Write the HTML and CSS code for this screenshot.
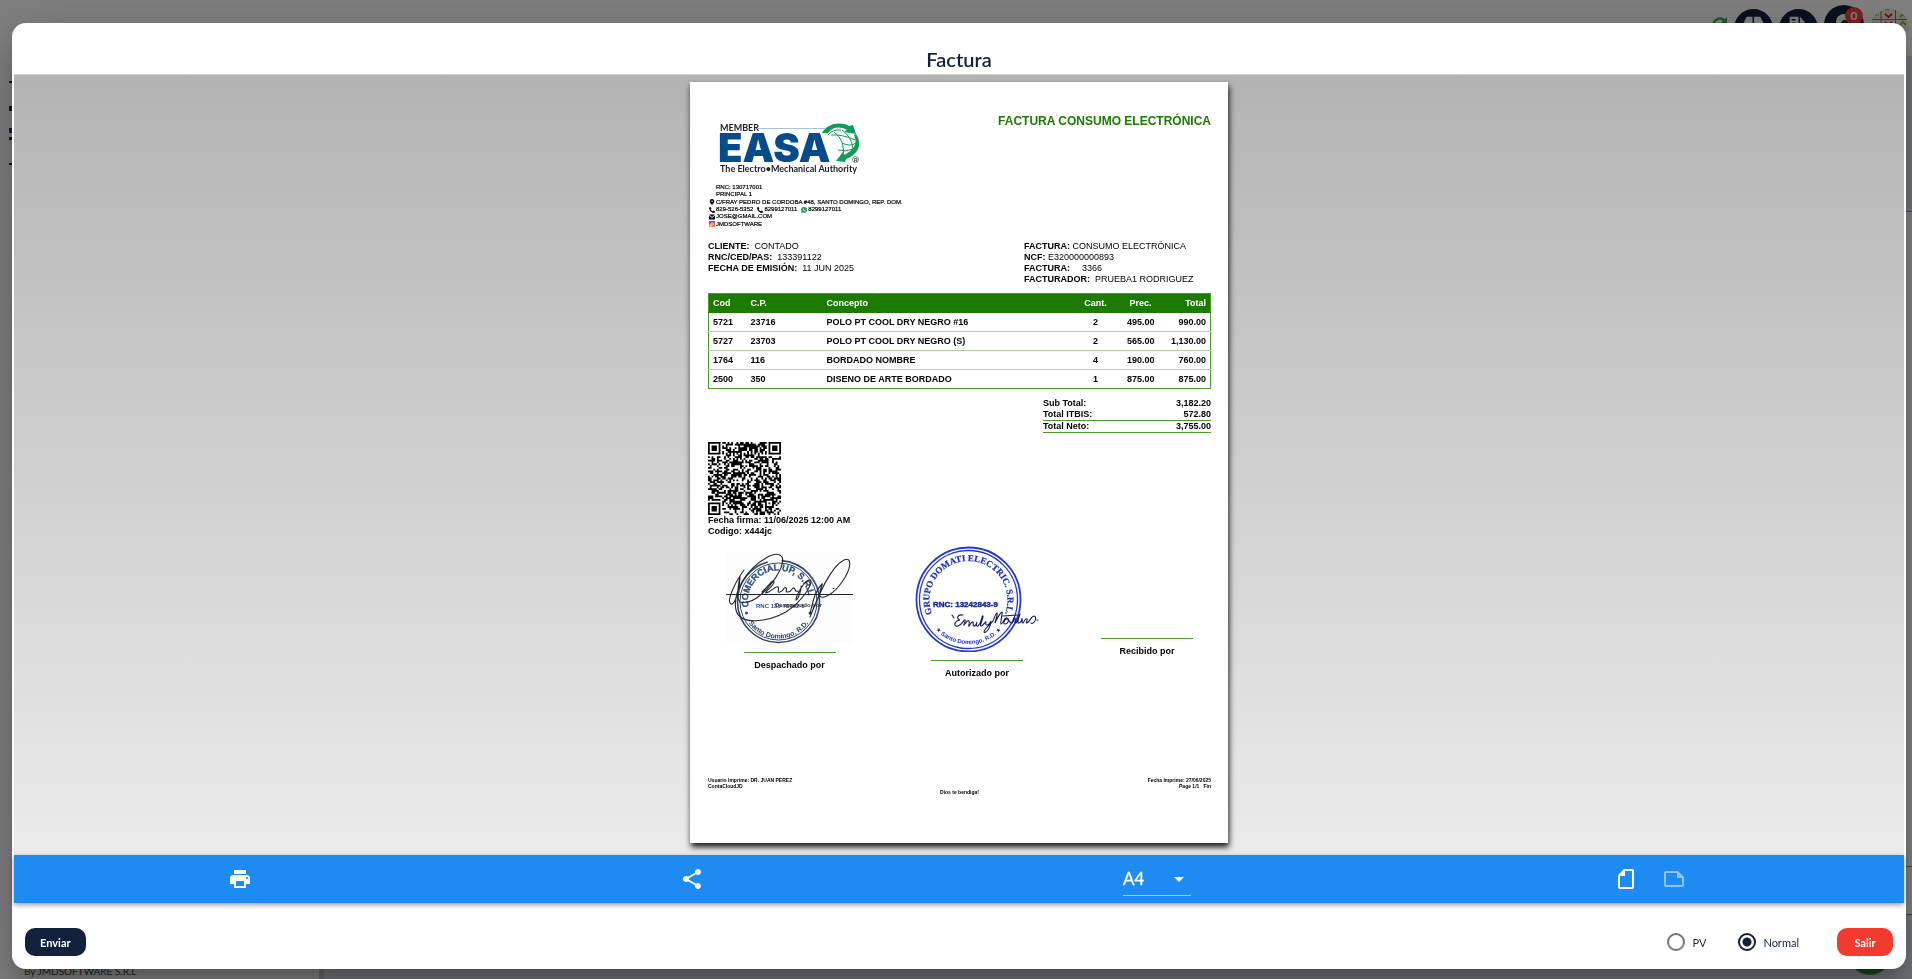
FILE: index.html
```html
<!DOCTYPE html>
<html lang="es">
<head>
<meta charset="utf-8">
<title>Factura</title>
<link rel="stylesheet" href="styles.css">
</head>
<body>
<div class="app" aria-hidden="true">
  <header class="topbar">
    <svg class="refresh" viewBox="0 0 16 16"><path d="M1.500 8a6.500 6.500 0 0 1 11-4.500M14.500 8a6.500 6.500 0 0 1-11 4.500" fill="none" stroke="#2fae4a" stroke-width="2.500"/><path d="M15 0v6H9z" fill="#2fae4a"/></svg>
    <span class="round"><svg viewBox="0 0 40 40"><path d="M13 8h6v8H9zM20.500 8H27l4 8H20.500z" fill="#fff"/></svg></span>
    <span class="round"><svg viewBox="0 0 40 40"><path d="M11 8h9v7h7v17H11z" fill="#fff"/><path d="M21.500 8l5.500 6h-5.500z" fill="#fff"/><path d="M13 11h4M13 14.500h4" stroke="#14213d" stroke-width="1.500"/></svg></span>
    <span class="round bell"><svg viewBox="0 0 40 40"><path d="M12 30V17a8 8 0 0 1 16 0v13z" fill="#fff"/><circle cx="21" cy="19" r="4" fill="#14213d"/></svg><b class="badge">0</b></span>
    <span class="avatar"><svg viewBox="0 0 39 39"><path d="M0 0h39v39H0z" fill="#f4ece0"/><path d="M11 0v39M25.500 0v39M0 10.500h39" stroke="#8a7560"/><path d="M2 6h7M2 14h7" stroke="#8a7560" stroke-dasharray="2 1"/><path d="M15 5l3.500 3L22 5M15 13l3.500 3 3.500-3" fill="none" stroke="#d22" stroke-width="2"/><path d="M30 8l3-3 3 3M30 16l3-3 3 3M15 1l2-2 2 2" fill="none" stroke="#8cb82c" stroke-width="2"/></svg></span>
  </header>
  <div class="shell">
    <aside class="sidebar">
      <div class="ticks"><i></i><i class="tall"></i><i class="tall blue"></i><i class="near"></i><i></i></div>
      <p class="by">By JMDSOFTWARE S.R.L</p>
    </aside>
    <main class="content"><div class="panel"></div><div class="strip"></div><span class="fab"></span></main>
  </div>
</div>

<div class="overlay">
  <section class="dialog" role="dialog" aria-labelledby="title">
    <h1 class="dialog-title" id="title">Factura</h1>
    <div class="viewer">
      <article class="paper">
        <div class="paper-head">
          <svg class="logo" viewBox="0 0 140 58" role="img" aria-label="EASA">
            <text class="logo-small" x="0" y="11">MEMBER</text>
            <path d="M37 8.500h68" stroke="#a9c3dc"/>
            <circle cx="121" cy="23" r="15" fill="#fff"/>
            <text class="logo-big" x="-2" y="42">EASA</text>
            <path d="M108 15q5-6 13-5M114 12q12 8 9 27M111 15q11-1 24 5M122 23q8 4 14 0M122 10q10 7 11 19M118 30q8 2 15-1" fill="none" stroke="#149a5a" stroke-width="1"/>
            <path d="M102 13C107 4 119 1 129 6l4-1 3 9-12-2 3-2c-8-4-14-3-19 3z" fill="#0f9b58"/>
            <path d="M136 14c7 10 2 21-10 25l-1 3-9-1 7-9 1 3c10-5 14-11 10-20z" fill="#0f9b58"/>
            <circle cx="135.500" cy="39.500" r="3" fill="#fff" stroke="#333" stroke-width=".6"/><text class="logo-reg" x="134" y="41.500">R</text>
            <text class="logo-tag" x="0" y="52">The Electro•Mechanical Authority</text>
          </svg>
          <h2 class="paper-title">FACTURA CONSUMO ELECTRÓNICA</h2>
        </div>

        <ul class="contact">
          <li class="indent">RNC: 130717001</li>
          <li class="indent">PRINCIPAL 1</li>
          <li><svg viewBox="0 0 10 10"><path d="M5 0a3.800 3.800 0 0 0-3.800 3.800C1.200 6.500 5 10 5 10s3.800-3.500 3.800-6.200A3.800 3.800 0 0 0 5 0zm0 5.200a1.300 1.300 0 1 1 0-2.600 1.300 1.300 0 0 1 0 2.600z"/></svg>C/FRAY PEDRO DE CORDOBA #48, SANTO DOMINGO, REP. DOM.</li>
          <li><svg viewBox="0 0 10 10"><path d="M2.500 0L0 1c0 5 4 9 9 9l1-2.500-2.500-1.500-1.500 1.200C4.600 6.500 3.500 5.400 2.800 4L4 2.500z"/></svg>829-526-5352 <svg class="next" viewBox="0 0 10 10"><path d="M2.500 0L0 1c0 5 4 9 9 9l1-2.500-2.500-1.500-1.500 1.200C4.600 6.500 3.500 5.400 2.800 4L4 2.500z"/></svg>8299127011 <svg class="next wa" viewBox="0 0 10 10"><path d="M0 10l.8-2.800A5 5 0 1 1 3 9.300z" fill="#25a555"/><path d="M3.500 2.500c-1 1.500 1.500 5 4 4.500V5.800L6.200 5.200l-.7.600-1-1.200.4-.8z" fill="#fff"/></svg>8299127011</li>
          <li><svg viewBox="0 0 10 10"><path d="M0 1h10L5 5zM0 2.500l5 4 5-4V9H0z"/></svg>JOSE@GMAIL.COM</li>
          <li><svg class="ig" viewBox="0 0 10 10"><path d="M0 0h10v5H0z" fill="#a436c5"/><path d="M0 5L10 3v7H0z" fill="#f5704a"/><path d="M0 7h5v3H0z" fill="#fbb03b"/><circle cx="5" cy="5" r="2.200" fill="none" stroke="#fff"/></svg>JMDSOFTWARE</li>
        </ul>

        <div class="parties">
          <div>
            <p><b>CLIENTE:</b><span class="wide">CONTADO</span></p>
            <p><b>RNC/CED/PAS:</b><span class="wide">133391122</span></p>
            <p><b>FECHA DE EMISIÓN:</b><span class="wide">11 JUN 2025</span></p>
          </div>
          <div>
            <p><b>FACTURA:</b> CONSUMO ELECTRÓNICA</p>
            <p><b>NCF:</b> E320000000893</p>
            <p><b>FACTURA:</b><span class="wider">3366</span></p>
            <p><b>FACTURADOR:</b><span class="wide">PRUEBA1 RODRIGUEZ</span></p>
          </div>
        </div>

        <table class="items">
          <colgroup><col class="c-cod"><col class="c-cp"><col><col class="c-cant"><col class="c-prec"><col class="c-total"></colgroup>
          <thead><tr><th>Cod</th><th>C.P.</th><th>Concepto</th><th class="mid">Cant.</th><th class="prec">Prec.</th><th class="num">Total</th></tr></thead>
          <tbody>
            <tr><td>5721</td><td>23716</td><td>POLO PT COOL DRY NEGRO #16</td><td class="mid">2</td><td class="num">495.00</td><td class="num">990.00</td></tr>
            <tr><td>5727</td><td>23703</td><td>POLO PT COOL DRY NEGRO (S)</td><td class="mid">2</td><td class="num">565.00</td><td class="num">1,130.00</td></tr>
            <tr><td>1764</td><td>116</td><td>BORDADO NOMBRE</td><td class="mid">4</td><td class="num">190.00</td><td class="num">760.00</td></tr>
            <tr><td>2500</td><td>350</td><td>DISENO DE ARTE BORDADO</td><td class="mid">1</td><td class="num">875.00</td><td class="num">875.00</td></tr>
          </tbody>
        </table>

        <dl class="totals">
          <div><dt>Sub Total:</dt><dd>3,182.20</dd></div>
          <div><dt>Total ITBIS:</dt><dd>572.80</dd></div>
          <div class="net"><dt>Total Neto:</dt><dd>3,755.00</dd></div>
        </dl>

        <div class="sign-info">
          <svg class="qr" id="qr" viewBox="0 0 41 41" role="img" aria-label="QR"></svg>
          <p>Fecha firma: 11/06/2025 12:00 AM</p>
          <p>Codigo: x444jc</p>
        </div>

        <div class="signatures">
          <figure class="first">
            <svg class="stamp-a" viewBox="0 0 127 93">
              <path d="M0 0h127v93H0z" fill="#fdfdfd"/>
              <g fill="none" stroke="#34497a"><circle cx="52.500" cy="49.500" r="41" stroke-width="1.600" stroke-dasharray="182 14 62"/><circle cx="52.500" cy="49.500" r="38.500" stroke-width="1"/></g>
              <path id="arcA" d="M22.600 55A30.500 30.500 0 1 1 82.400 55" fill="none"/>
              <path id="arcB" d="M21 69A37 37 0 0 0 84 69" fill="none"/>
              <text class="stamp-a-top"><textPath href="#arcA">COMERCIAL UP, S.R.L</textPath></text>
              <text class="stamp-a-low"><textPath href="#arcB" startOffset="50%">Santo Domingo, R.D.</textPath></text>
              <text class="stamp-a-mid" x="30" y="56">RNC 131-76092-1</text>
              <text class="stamp-a-name" x="49" y="55">Despachado por</text>
              <circle cx="20.500" cy="61" r="1.500" fill="#2c4a90"/><circle cx="84" cy="61" r="1.500" fill="#2c4a90"/>
              <path d="M0 42.500h127M18 18C8 32 0 50 5 52S14 32 14 24c-2 10-4 22 0 26 14 4 32-16 40-32 8-18-4-18-14-12C22 16 6 40 10 58c4 16 32 12 50 2C78 48 88 30 84 28c-6 0-14 16-14 20 2 0 6-12 5-14M36 40c6-6 12-14 12-10s-10 10-8 11c4 0 10-8 12-6s-2 6 2 5 4-6 6-4-2 4 2 4 4-5 6-4 0 4 4 3M84 65c8-20 20-50 34-57 8-4 8 8-2 22-8 12-20 18-22 14s4-14 2-12c-6 6-8 12-12 30M107 36.500h1" fill="none" stroke="#22272f" stroke-width="1.100" stroke-linecap="round"/>
            </svg>
            <figcaption>Despachado por</figcaption>
          </figure>
          <figure>
            <svg class="stamp-b" viewBox="0 0 125 107">
              <g fill="none" stroke="#2238c8"><circle cx="53.500" cy="54.500" r="52" stroke-width="1.800"/><circle cx="53.500" cy="54.500" r="49" stroke-width="1.300"/></g>
              <path id="arcC" d="M17.500 70A39 39 0 1 1 89.500 70" fill="none"/>
              <path id="arcD" d="M15 77A44.500 44.500 0 0 0 92 77" fill="none"/>
              <text class="stamp-b-top"><textPath href="#arcC" startOffset="50%">GRUPO DOMATI ELECTRIC. S.R.L.</textPath></text>
              <text class="stamp-b-low"><textPath href="#arcD" startOffset="50%">★ Santo Domingo, R.D. ★</textPath></text>
              <text class="stamp-b-mid" x="18" y="62">RNC: 13242843-9</text>
              <path d="M37 70l2 3M48 70c-6-1-7 4-3 5-6 1-7 7-2 6 4-1 6-7 7-6s-2 6-1 5 4-6 5-4-1 6 0 5 3-5 4-4-1 4 1 4 3-4 3-4-2 5 1 4c3-2 4-11 5-10s-4 10-2 10 5-5 5-4-1 3 1 3 4-4 4-4c0 6-5 13-7 11 0-3 6-7 9-11 2-5 3-8 4-8s-2 10-2 10c2-5 6-11 7-11s-2 10-1 12c3-1 3-7 6-6s1 6-2 6 0-5 2-5 3 5 5 4 2-6 3-5-1 5 1 5c2-2 4-10 4-9s-4 10-1 9 2-3 3-4-1 4 1 4c2-3 3-5 4-4s-2 4 0 4c3-1 4-7 7-7 4 1 0 9-3 7M88 71l14-1M122 75h1" fill="none" stroke="#17175e" stroke-width="1.100" stroke-linecap="round"/>
            </svg>
            <figcaption>Autorizado por</figcaption>
          </figure>
          <figure class="blank">
            <figcaption>Recibido por</figcaption>
          </figure>
        </div>

        <footer class="paper-foot">
          <div class="foot-row"><span>Usuario Imprime: DR. JUAN PEREZ<br>ContaCloudJD</span><span class="foot-right">Fecha Imprime: 27/06/2025<br>Page 1/1 &nbsp; Fin</span></div>
          <p>Dios te bendiga!</p>
        </footer>
      </article>
    </div>

    <div class="toolbar">
      <button class="tool" type="button" aria-label="Imprimir"><svg viewBox="0 0 24 24"><path d="M19 8H5c-1.660 0-3 1.340-3 3v6h4v4h12v-4h4v-6c0-1.660-1.340-3-3-3zm-3 11H8v-5h8v5zm3-7c-.55 0-1-.45-1-1s.45-1 1-1 1 .45 1 1-.45 1-1 1zm-1-9H6v4h12V3z"/></svg></button>
      <button class="tool" type="button" aria-label="Compartir"><svg viewBox="0 0 24 24"><path d="M18 16.080c-.76 0-1.440.3-1.960.77L8.910 12.700c.05-.23.09-.46.09-.7s-.04-.47-.09-.7l7.050-4.110c.54.5 1.250.81 2.040.81 1.660 0 3-1.340 3-3s-1.340-3-3-3-3 1.340-3 3c0 .24.04.47.09.7L8.040 9.810C7.500 9.310 6.790 9 6 9c-1.660 0-3 1.340-3 3s1.340 3 3 3c.79 0 1.500-.31 2.040-.81l7.120 4.160c-.05.21-.08.43-.08.65 0 1.610 1.310 2.920 2.920 2.920s2.920-1.310 2.920-2.920-1.310-2.920-2.920-2.920z"/></svg></button>
      <div class="format"><select aria-label="Formato"><option>A4</option></select><svg viewBox="0 0 24 24"><path d="M7 10l5 5 5-5z"/></svg></div>
      <div class="orient">
        <button class="tool" type="button" aria-label="Vertical"><svg class="portrait" viewBox="0 0 24 24"><path d="M16 4H4c-1.100 0-2 .9-2 2v12c0 1.100.9 2 2 2h16c1.100 0 2-.9 2-2v-8l-6-6zM4 18V6h11v5h5v7H4z"/></svg></button>
        <button class="tool off" type="button" aria-label="Horizontal"><svg viewBox="0 0 24 24"><path d="M16 4H4c-1.100 0-2 .9-2 2v12c0 1.100.9 2 2 2h16c1.100 0 2-.9 2-2v-8l-6-6zM4 18V6h11v5h5v7H4z"/></svg></button>
      </div>
    </div>

    <div class="actions">
      <button class="btn send" type="button">Enviar</button>
      <div class="choices">
        <label><input type="radio" name="mode">PV</label>
        <label><input type="radio" name="mode" checked>Normal</label>
      </div>
      <button class="btn exit" type="button">Salir</button>
    </div>
  </section>
</div>
<script src="qr.js"></script>
</body>
</html>
```

FILE: styles.css
```css
* { box-sizing: border-box; }
body { margin: 0; font-family: Lato, sans-serif; color: #14213d; background: #fff; overflow: hidden; }
h1, h2, p, ul, dl, dd, figure { margin: 0; padding: 0; }
button, select { font: inherit; border: 0; cursor: pointer; }
svg { display: block; flex: none; }

/* Page under the dialog */
.app { height: 100vh; display: flex; flex-direction: column; }
.topbar { height: 56px; padding: 0 3px; display: flex; justify-content: flex-end; align-items: center; gap: 6px; }
.refresh { width: 16px; height: 16px; align-self: flex-start; margin-top: 17px; }
.round, .avatar { width: 39px; height: 39px; border-radius: 50%; }
.round { background: #14213d; position: relative; }
.bell { width: 40px; height: 46px; border-radius: 20px; }
.avatar { overflow: hidden; }
.badge { position: absolute; right: 1px; top: 2px; width: 18px; height: 18px; border-radius: 50%; background: #f44336; color: #fff; font-size: 12px; line-height: 18px; text-align: center; }
.shell { flex: 1; display: flex; background: #dfe5ee; }
.sidebar { width: 324px; border-right: 5px solid #ccc; background: #fff; padding: 25px 9px 0; display: flex; flex-direction: column; justify-content: space-between; }
.ticks { display: flex; flex-direction: column; width: 60px; }
.ticks i { height: 2px; margin-bottom: 23px; background: #222; }
.ticks .tall { height: 5px; margin-bottom: 17px; }
.ticks .blue { background: #123c6e; margin-bottom: 4px; }
.ticks .near { height: 3px; }
.by { padding: 0 15px 2px; font-size: 10px; line-height: 12px; color: #444; }
.content { flex: 1; display: flex; flex-direction: column; padding-top: 155px; position: relative; }
.panel { flex: 1; background: #fff; border-top: 1px solid #999; border-bottom: 1px solid #999; }
.strip { height: 112px; background: linear-gradient(#fff 47px, #777 47px, #777 48px, #dfe5ee 48px); }
.fab { position: absolute; right: 20px; bottom: 4px; width: 44px; height: 44px; border-radius: 50%; background: #2f8f2f; }

/* Dialog */
.overlay { position: fixed; inset: 0; padding: 23px 6px 10px 12px; background: rgba(0, 0, 0, .5); display: flex; }
.dialog { flex: 1; min-width: 0; display: flex; flex-direction: column; padding: 0 2px; background: #fff; border-radius: 14px; box-shadow: 0 11px 15px -7px rgba(0, 0, 0, .2), 0 24px 38px 3px rgba(0, 0, 0, .14), 0 9px 46px 8px rgba(0, 0, 0, .12); }
.dialog-title { padding: 24px 0 3px; font-size: 20px; line-height: 24px; font-weight: 600; text-align: center; }
.viewer { flex: 1; min-height: 0; padding: 7px 0 12px; border-top: 1px solid #d2d2d2; background: linear-gradient(#b3b3b3, #ebebeb); display: flex; justify-content: center; }

/* Sheet */
.paper { aspect-ratio: 538 / 761; height: 100%; padding: 32px 17px 48px 18px; background: #fff; color: #000; box-shadow: 1px 4px 6px rgba(0, 0, 0, .9); font-family: "Liberation Sans", sans-serif; font-size: 9px; line-height: 11px; display: flex; flex-direction: column; }
.paper-head { display: flex; justify-content: space-between; padding-left: 12px; }
.logo { width: 140px; height: 58px; margin-top: 6px; overflow: visible; }
.logo-small { font: 700 9px Lato, sans-serif; fill: #222; }
.logo-big { font: 900 40px Inter, sans-serif; fill: #064b8c; }
.logo-tag { font: 700 9px Lato, sans-serif; fill: #222; }
.logo-reg { font: 700 5px "Liberation Sans", sans-serif; fill: #333; }
.paper-title { font-size: 12px; line-height: 14px; color: #1d7a00; }
.contact { display: grid; grid-auto-rows: 1fr; list-style: none; height: 44px; margin-top: 6px; font-size: 6px; line-height: 7px; -webkit-text-stroke: .2px #000; }
.contact li { display: flex; align-items: center; gap: 1px; padding-left: 1px; }
.contact .indent { padding-left: 8px; }
.contact svg { width: 6px; height: 6px; }
.contact .next { margin-left: 3px; }
.parties { display: flex; margin-top: 13px; }
.parties > div:first-child { width: 316px; }
.wide { margin-left: 5px; }
.wider { margin-left: 12px; }

.items { width: 100%; margin-top: 8px; table-layout: fixed; border-collapse: collapse; border: 1px solid #4a9e30; font-weight: 700; }
.c-cod { width: 38px; }
.c-cp { width: 76px; }
.c-cant { width: 46px; }
.c-prec { width: 36px; }
.c-total { width: 56px; }
.items th, .items td { height: 19px; padding: 0 4px; text-align: left; border-bottom: 1px solid #b5d7a8; }
.items thead { background: #1d7a00; color: #fff; }
.items thead th { border-color: #1d7a00; }
.items tr:last-child td { border-color: #4a9e30; }
.items .num { text-align: right; }
.items .mid { text-align: center; }
.items .prec { padding: 0 3px; text-align: right; }
.items td:nth-child(5) { padding: 0; }

.totals { align-self: flex-end; width: 168px; margin-top: 9px; font-weight: 700; }
.totals div { display: flex; justify-content: space-between; }
.totals .net { border-top: 1px solid #4a9e30; border-bottom: 1px solid #4a9e30; }
.sign-info { margin-top: 9px; font-weight: 700; }
.qr { width: 73px; height: 73px; }

.signatures { display: grid; grid-template-columns: 163fr 212fr 128fr; align-items: start; margin-top: 8px; font-weight: 700; }
.signatures figure { display: flex; flex-direction: column; align-items: center; }
.signatures figcaption { width: 92px; padding-top: 7px; border-top: 1px solid #4a9e30; text-align: center; }
.signatures .first { padding-top: 7px; }
.signatures .blank { padding-top: 93px; }
.stamp-a { width: 127px; height: 93px; margin-bottom: 7px; }
.stamp-b { width: 125px; height: 107px; margin-bottom: 8px; }
.stamp-a-top { font: 700 9px "Liberation Sans", sans-serif; fill: #34508a; stroke: #34508a; stroke-width: .3px; }
.stamp-a-low { font: 700 7px "Liberation Sans", sans-serif; fill: #2d3f66; text-anchor: middle; }
.stamp-a-mid { font: 700 6px "Liberation Sans", sans-serif; fill: #34508a; }
.stamp-a-name { font: 700 6px "Liberation Sans", sans-serif; fill: #333; }
.stamp-b-top { font: 700 9px "Liberation Serif", serif; fill: #1a2fc0; stroke: #1a2fc0; stroke-width: .2px; text-anchor: middle; }
.stamp-b-low { font: 700 6px "Liberation Sans", "DejaVu Sans", sans-serif; fill: #1a2fd8; text-anchor: middle; }
.stamp-b-mid { font: 700 8px "Liberation Sans", sans-serif; fill: #10259a; stroke: #10259a; stroke-width: .4px; }

.paper-foot { margin-top: auto; font-size: 5px; line-height: 6px; font-weight: 700; text-align: center; }
.foot-row { display: flex; justify-content: space-between; text-align: left; }
.foot-row .foot-right { text-align: right; }

/* Toolbar */
.toolbar { height: 48px; display: flex; justify-content: space-around; align-items: center; background: #1e8bf2; box-shadow: 0 2px 5px rgba(0, 0, 0, .4); }
.tool { width: 48px; height: 48px; padding: 0; background: none; display: grid; place-items: center; }
.toolbar svg { width: 24px; height: 24px; fill: #fff; }
.portrait { transform: rotate(-90deg); }
.off { opacity: .5; }
.format { position: relative; width: 74px; padding: 0 3px; }
.format select { width: 100%; height: 34px; padding: 0; appearance: none; background: none; border-bottom: 1px solid #b9c6d4; border-radius: 0; color: #fff; font-size: 17px; -webkit-text-stroke: .3px #fff; }
.format select option { color: #14213d; }
.format svg { position: absolute; right: 3px; top: 5px; pointer-events: none; }
.orient { display: flex; justify-content: center; width: 104px; }

.actions { display: flex; align-items: center; padding: 25px 11px 13px; }
.btn { min-width: 56px; height: 28px; padding: 0 15px; border-radius: 10px; color: #fff; font-size: 11px; font-weight: 700; }
.send { background: #14213d; }
.exit { background: #f23a2f; }
.choices { flex: 1; display: flex; justify-content: flex-end; gap: 32px; padding-right: 38px; font-size: 11px; }
.choices label { display: flex; align-items: center; gap: 7px; }
.choices input { appearance: none; width: 18px; height: 18px; margin: 0; border: 2px solid #757575; border-radius: 50%; }
.choices input:checked { border-color: #14213d; background: radial-gradient(circle, #14213d 4px, #fff 5px); }
```

FILE: qr.js
```javascript
// Builds the QR symbol: three finder patterns, timing lines and a data field.
const SIZE = 41;
const qr = document.getElementById('qr');
let seed = 4441;
const next = () => (seed = (seed * 16807) % 2147483647) / 2147483647;
const finder = (x, y) => {
  const d = Math.max(Math.abs(x - 3), Math.abs(y - 3));
  return d === 3 || d <= 1;
};
let d = '';
for (let y = 0; y < SIZE; y++) {
  for (let x = 0; x < SIZE; x++) {
    let on = next() > 0.46;
    const right = x >= SIZE - 8, left = x < 8, top = y < 8, bottom = y >= SIZE - 8;
    if (left && top) on = x < 7 && y < 7 && finder(x, y);
    else if (right && top) on = x > SIZE - 8 && y < 7 && finder(x - SIZE + 7, y);
    else if (left && bottom) on = x < 7 && y > SIZE - 8 && finder(x, y - SIZE + 7);
    else if (x === 6 || y === 6) on = (x + y) % 2 === 0;
    else if (Math.abs(x - 34) <= 2 && Math.abs(y - 34) <= 2) on = Math.max(Math.abs(x - 34), Math.abs(y - 34)) !== 1;
    if (on) d += `M${x} ${y}h1v1h-1z`;
  }
}
const path = document.createElementNS('http://www.w3.org/2000/svg', 'path');
path.setAttribute('d', d);
qr.appendChild(path);
```
